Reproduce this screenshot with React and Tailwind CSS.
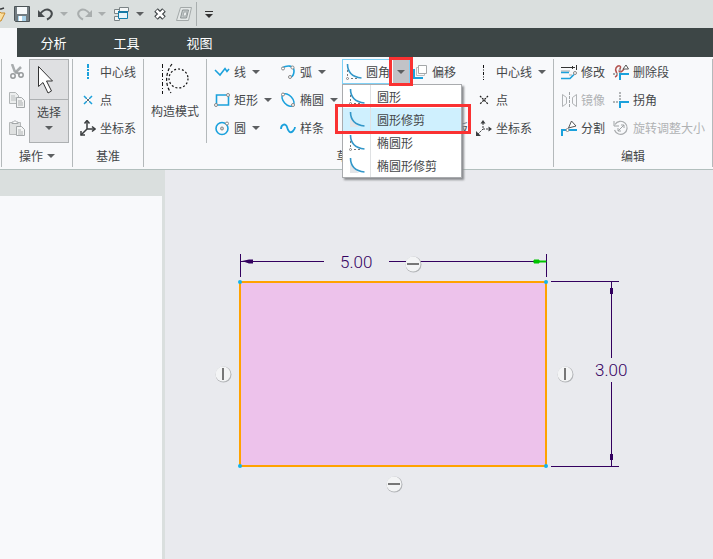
import { useState } from "react";

function Svg({ w = 16, children }) {
  return (
    <svg
      width={w}
      height="16"
      viewBox={`0 0 ${w} 16`}
      fill="none"
      className="shrink-0"
      aria-hidden="true"
    >
      {children}
    </svg>
  );
}

function Caret({ color = "#5c5f61" }) {
  return (
    <svg width="8" height="4" viewBox="0 0 8 4" className="shrink-0" aria-hidden="true">
      <path d="M0 0h8L4 4z" fill={color} />
    </svg>
  );
}

const BLUE = "#1ba1dc";
const INK = "#3a3d3f";

const icons = {
  folder: (
    <Svg w={6}>
      <path d="M-3 3h4l3-1" stroke={INK} strokeWidth="1.500" />
      <path d="M-6 6H0l1 1h4L1 15h-7z" fill="#fbdf9f" stroke="#c98c2c" />
    </Svg>
  ),
  save: (
    <Svg>
      <path d="M.5.5h15v15h-14l-1-1z" fill="#737d82" stroke="#4c5457" />
      <path d="M3 1h10v7H3z" fill="#f6f9fa" />
      <path d="M4 10h8v5H4z" fill="#a9d3ea" />
      <path d="M5 10h3v5H5z" fill="#fff" />
    </Svg>
  ),
  undo: (
    <Svg>
      <path d="M2 8C5 4 9 2.500 12 4.500S14.500 11 9 13.500" stroke="#474c4e" strokeWidth="2" />
      <path d="M0 4v7h7z" fill="#474c4e" />
    </Svg>
  ),
  redo: (
    <Svg>
      <path d="M14 8C11 4 7 2.500 4 4.500S1.500 11 7 13.500" stroke="#a9aeae" strokeWidth="2" />
      <path d="M16 4v7H9z" fill="#a9aeae" />
    </Svg>
  ),
  windows: (
    <Svg>
      <path d="M5.500 1.500h9v4h-9zM.5 3.500h5v4h-5zM.5 10.500h5v4h-5z" fill="#f4f6f6" stroke="#7b8385" />
      <path d="M4.500 5.500h9v7h-9z" fill="#e6f4fb" stroke="#137fac" />
      <path d="M4 5h10v2H4z" fill="#1479a6" />
    </Svg>
  ),
  close: (
    <Svg>
      <path d="M4 4l8 8M12 4l-8 8" stroke="#3d4244" strokeWidth="5" />
      <path d="M4.500 4.500l7 7M11.500 4.500l-7 7" stroke="#fff" strokeWidth="2.500" />
    </Svg>
  ),
  layers: (
    <Svg>
      <path d="M4.500 1.500h11l-3 13H.5z" fill="#e4e8e7" stroke="#a3a9a9" />
      <path d="M6.500 4h6l-2 8h-6z" fill="#c4caca" stroke="#8e9596" />
      <path d="M8 6h3l-1 4H7z" fill="#eef1f1" stroke="#a3a9a9" />
    </Svg>
  ),
  cut: (
    <Svg>
      <path d="M3 0l3 8M12 3L6 9" stroke="#a8acae" strokeWidth="2.500" />
      <path d="M6 8l5 2" stroke="#a0a4a6" strokeWidth="2" />
      <circle cx="4" cy="12" r="2.200" stroke="#96999b" strokeWidth="1.500" />
      <circle cx="12" cy="11" r="2.200" stroke="#96999b" strokeWidth="1.500" />
    </Svg>
  ),
  copy: (
    <Svg>
      <path d="M.5.5h6l3 3v8h-9z" fill="#eceeee" stroke="#b1b5b6" />
      <path d="M2 4h4M2 6h5M2 8h5" stroke="#b9bdbe" />
      <path d="M7.500 5.500h5l3 3v7h-8z" fill="#f1f2f2" stroke="#a3a7a9" />
      <path d="M9 9h4M9 11h5M9 13h5" stroke="#a9adae" />
    </Svg>
  ),
  paste: (
    <Svg>
      <path d="M.5 2.500h11v12H.5z" fill="#dfe1e1" stroke="#b5b8b9" />
      <path d="M3 3.500V2h1.500L6 .5 7.500 2H9v1.500z" fill="#fff" stroke="#a3a7a9" />
      <path d="M7.500 6.500h5l3 3v6h-8z" fill="#f4f5f5" stroke="#a3a7a9" />
      <path d="M9 10h3M9 12h5M9 14h5" stroke="#b0b4b5" />
    </Svg>
  ),
  axisBlue: (
    <Svg>
      <path d="M8 0v16" stroke={BLUE} strokeWidth="2" strokeDasharray="4 1 2 1" />
    </Svg>
  ),
  axisDark: (
    <Svg>
      <path d="M7.500 1v15" stroke="#111" strokeDasharray="3 1.500 1 1.500" />
    </Svg>
  ),
  pointBlue: (
    <Svg>
      <path d="M4 4l8 8M12 4l-8 8" stroke="#5f6b72" />
      <path
        d="M4 4l2.500 2.500M12 4L9.500 6.500M4 12l2.500-2.500M12 12L9.500 9.500"
        stroke={BLUE}
        strokeWidth="1.500"
      />
    </Svg>
  ),
  pointDark: (
    <Svg>
      <path d="M4 4l8 8M12 4l-8 8" stroke="#222" strokeWidth="1.300" strokeDasharray="2 1" />
    </Svg>
  ),
  csys: (
    <Svg>
      <path d="M7 1v8h8M7 9l-6 6" stroke={INK} strokeWidth="1.500" />
      <path
        d="M4.500 3.500L7 .5l2.500 3M12 6.500L15 9l-3 2.500M1 11v4h4"
        stroke={INK}
        strokeWidth="1.500"
      />
    </Svg>
  ),
  csysDashed: (
    <Svg>
      <path d="M7 3v6h5M7 9l-5 5" stroke={INK} strokeDasharray="2 1" />
      <path d="M4.500 3.500L7 0l2.500 3.500zM12.500 6.500L16 9l-3.500 2.500zM0 11v5h5z" fill={INK} />
    </Svg>
  ),
  line: (
    <Svg>
      <path d="M1 6l5 5 5-6.500 2 3L15 5" stroke={BLUE} strokeWidth="1.600" />
    </Svg>
  ),
  rect: (
    <Svg>
      <path d="M2.500 3h12v10h-12z" stroke={BLUE} strokeWidth="1.600" />
      <circle cx="14" cy="3" r="1.500" fill="#fff" stroke="#888" />
      <circle cx="2" cy="13" r="1.500" fill="#fff" stroke="#888" />
    </Svg>
  ),
  circle: (
    <Svg>
      <circle cx="8" cy="8.500" r="6" stroke={BLUE} strokeWidth="1.600" />
      <circle cx="8" cy="8.500" r="1.500" fill="#ccc" stroke="#888" />
      <circle cx="13" cy="3.500" r="1.500" fill="#fff" stroke="#888" />
    </Svg>
  ),
  arc: (
    <Svg>
      <path d="M2 4C7 1 14 1 14 7c0 3-1 5-3 6" stroke={BLUE} strokeWidth="1.600" />
      <circle cx="3" cy="4.500" r="1.500" fill="#fff" stroke="#888" />
      <circle cx="12.500" cy="3.500" r="1.500" fill="#fff" stroke="#888" />
      <circle cx="10" cy="13" r="1.500" fill="#fff" stroke="#888" />
    </Svg>
  ),
  ellipse: (
    <Svg>
      <ellipse
        cx="8"
        cy="8"
        rx="7.500"
        ry="4.500"
        transform="rotate(48 8 8)"
        stroke={BLUE}
        strokeWidth="1.500"
      />
      <circle cx="3" cy="2.500" r="1.500" fill="#fff" stroke="#888" />
      <circle cx="13" cy="13" r="1.500" fill="#fff" stroke="#888" />
    </Svg>
  ),
  spline: (
    <Svg>
      <path d="M1 9C1 4 6 3 7 7s3 7 6 4c1-1 2-2 2-4" stroke={BLUE} strokeWidth="1.800" />
    </Svg>
  ),
  fillet: (
    <Svg>
      <path d="M1.500 6v8.500H11" stroke="#777" strokeDasharray="2 2" />
      <path d="M1.500 0c0 8 5 13 14 14" stroke="#3296c8" strokeWidth="1.600" />
      <circle cx="1.500" cy="14.500" r="1" fill="#fff" stroke="#888" />
    </Svg>
  ),
  filletTrim: (
    <Svg>
      <path d="M1 6v9h9z" fill="#e3e5e8" />
      <path d="M1.500 0c0 8 5 13 14 14" stroke="#3296c8" strokeWidth="1.600" />
    </Svg>
  ),
  offset: (
    <Svg>
      <path d="M4.500 3.500h8v8h-8z" stroke="#b9bcbe" />
      <path d="M6.500 1.500h8v8h-8z" fill="#fff" stroke="#a4a7a9" />
      <path d="M2 5v9h9" stroke={BLUE} strokeWidth="2" />
    </Svg>
  ),
  palette: (
    <Svg>
      <circle cx="8" cy="8" r="6" stroke={BLUE} strokeWidth="1.500" />
    </Svg>
  ),
  modify: (
    <Svg>
      <path d="M0 3.500h14M15.500 1v5M11.500 2v3" stroke="#333" />
      <path d="M0 7h9M8 11h3" stroke="#a4a7a9" />
      <path d="M0 8.500h8M0 14.500h9l4-4" stroke={BLUE} strokeWidth="1.600" />
      <circle cx="14" cy="9" r="1.500" fill="#fff" stroke="#888" />
    </Svg>
  ),
  mirror: (
    <Svg>
      <path d="M1.500 2.500l4 3v6l-4 3zM15.500 2.500l-4 3v6l4 3z" stroke="#b0b3b5" />
      <path d="M8.500 0v16" stroke="#a0a4a6" strokeDasharray="3 1" />
    </Svg>
  ),
  divide: (
    <Svg>
      <path d="M1 16v-6h4M8 10h8" stroke={BLUE} strokeWidth="2" />
      <circle cx="6.500" cy="10" r="1.500" fill="#fff" stroke="#888" />
      <path d="M7.500 8L10.500 1 15 6z" fill="#fff" stroke="#555" />
    </Svg>
  ),
  deleteSeg: (
    <Svg>
      <path d="M2 13c5-2-1-6 1-9s6-3 4 1c-2 3 0 5 4 0" stroke="#b2524e" strokeWidth="1.500" />
      <path d="M7 16v-6h9" stroke={BLUE} strokeWidth="2" />
      <path d="M0 10h6M7 5v4" stroke="#a4a7a9" strokeWidth="2" strokeDasharray="2 1" />
      <path d="M10 5l3-4 2.500 4z" fill="#fff" stroke="#555" />
    </Svg>
  ),
  corner: (
    <Svg>
      <path d="M7 0v8M0 10h6" stroke="#b2b5b7" strokeWidth="2" strokeDasharray="2 1" />
      <path d="M7 16v-6h9" stroke={BLUE} strokeWidth="2" />
    </Svg>
  ),
  rotate: (
    <Svg>
      <path d="M2 4.500A6.500 6.500 0 1 1 1.500 10" stroke="#a9acae" strokeWidth="1.200" />
      <path d="M1 1v5h5M5 11l6-6M5 8v3h3M8 5h3v3" stroke="#a0a4a6" />
    </Svg>
  ),
};

function Tool({ icon, label, caret, disabled }) {
  return (
    <button
      type="button"
      disabled={disabled}
      className="flex h-[25px] items-center whitespace-nowrap disabled:text-[#b0b2b4]"
    >
      {icons[icon]}
      <span className="ml-1">{label}</span>
      {caret ? (
        <span className="ml-1.5">
          <Caret />
        </span>
      ) : null}
    </button>
  );
}

function Column({ children, className = "" }) {
  return (
    <div className={`flex flex-col items-start gap-[3px] ${className}`}>{children}</div>
  );
}

function Group({ label, caret, children, className = "" }) {
  return (
    <section
      aria-label={label}
      className={`flex shrink-0 flex-col border-l border-[#b4b9bb] ${className}`}
    >
      <div className="flex h-[84px]">{children}</div>
      <div className="flex h-6 items-center justify-center gap-1 pt-0.5">
        <span>{label}</span>
        {caret ? <Caret /> : null}
      </div>
    </section>
  );
}

function QuickButton({ icon, label, caret, disabled }) {
  return (
    <button type="button" aria-label={label} className="flex shrink-0 items-center gap-1.5">
      {icons[icon]}
      {caret ? <Caret color={disabled ? "#a9aeae" : "#5c5f61"} /> : null}
    </button>
  );
}

function QuickAccess() {
  return (
    <div className="flex h-7 items-center gap-2 bg-[#dadfde]">
      <QuickButton icon="folder" label="打开" />
      <QuickButton icon="save" label="保存" />
      <QuickButton icon="undo" label="撤消" caret disabled />
      <QuickButton icon="redo" label="重做" caret disabled />
      <QuickButton icon="windows" label="窗口" caret />
      <QuickButton icon="close" label="关闭" />
      <QuickButton icon="layers" label="图层" />
      <div className="-ml-1 h-6 w-px bg-[#a9afaf]" />
      <button type="button" aria-label="自定义" className="flex flex-col gap-0.5">
        <span className="h-px w-2 bg-[#333]" />
        <Caret color="#333" />
      </button>
    </div>
  );
}

const tabs = ["分析", "工具", "视图"];

function Tabs() {
  return (
    <nav className="flex h-[29px] bg-[#f8f9fb] pl-[17px]">
      <div className="flex grow bg-[#3d4646]">
        {tabs.map((tab) => (
          <button key={tab} type="button" className="w-[73px] text-[13px] text-white">
            {tab}
          </button>
        ))}
      </div>
    </nav>
  );
}

const filletTypes = [
  { label: "圆形", icon: "fillet" },
  { label: "圆形修剪", icon: "filletTrim" },
  { label: "椭圆形", icon: "fillet" },
  { label: "椭圆形修剪", icon: "filletTrim" },
];

function FilletMenu() {
  const [open, setOpen] = useState(true);
  const [active, setActive] = useState("圆形修剪");

  return (
    <div className="relative mr-0.5 ml-1 h-[25px] w-[68px]">
      <div className="flex h-full border border-[#7fd0f5] bg-[#fbfcfe]">
        <button type="button" className="flex grow items-center gap-1 pl-[3px] whitespace-nowrap">
          {icons.fillet}
          圆角
        </button>
        <button
          type="button"
          aria-label="圆角类型"
          aria-expanded={open}
          onClick={() => setOpen(!open)}
          className="relative flex w-4 shrink-0 items-center justify-center bg-[#c2c3c7]"
        >
          <Caret />
          <span className="absolute -inset-x-1 -inset-y-[3px] z-30 border-3 border-[#fa3232]" />
        </button>
      </div>

      {open ? (
        <ul
          role="menu"
          className="absolute top-full left-0 z-20 w-[120px] border border-[#a9abae] bg-white shadow-[2px_2px_2px_#8a8c8f]"
        >
          {filletTypes.map((type) => (
            <li key={type.label} role="none" className="relative">
              <button
                type="button"
                role="menuitem"
                onClick={() => setActive(type.label)}
                className={`flex h-[23px] w-full items-center ${
                  type.label === active ? "bg-[#cff0fe]" : ""
                }`}
              >
                <span className="flex h-full w-7 items-center justify-center border-r border-[#dfe1e3]">
                  {icons[type.icon]}
                </span>
                <span className="ml-1.5">{type.label}</span>
              </button>
              {type.label === active ? (
                <span className="pointer-events-none absolute -top-1 -right-2.5 -bottom-[3px] -left-2 z-10 border-3 border-[#fa3232]" />
              ) : null}
            </li>
          ))}
        </ul>
      ) : null}
    </div>
  );
}

function Ribbon() {
  return (
    <div className="flex border-b border-[#b2bfbd] bg-[#f8f9fb] py-0.5 pl-px text-[12px]">
      <Group label="操作" caret>
        <Column className="pl-[7px]">
          <button type="button" aria-label="剪切" className="flex h-[25px] items-center">
            {icons.cut}
          </button>
          <button type="button" aria-label="复制" className="flex h-[25px] items-center">
            {icons.copy}
          </button>
          <button type="button" aria-label="粘贴" className="flex h-[25px] items-center">
            {icons.paste}
          </button>
        </Column>
        <div className="mr-[3px] ml-1 flex w-10 flex-col border border-[#adb0b2] bg-[#dfe0e2]">
          <button
            type="button"
            aria-label="选择工具"
            className="flex h-10 items-center border-b border-[#adb0b2] pl-[7px]"
          >
            <svg width="18" height="30" viewBox="0 0 18 30" aria-hidden="true">
              <path
                d="M1.500 1.500v20l4.500-4 5 10.500 3.500-2L9.500 16h6z"
                fill="#fff"
                stroke="#333"
              />
            </svg>
          </button>
          <button type="button" className="flex grow flex-col items-center pt-1">
            选择
            <span className="mt-1.5">
              <Caret />
            </span>
          </button>
        </div>
      </Group>

      <Group label="基准" className="[&>div]:px-[7px]">
        <Column>
          <Tool icon="axisBlue" label="中心线" />
          <Tool icon="pointBlue" label="点" />
          <Tool icon="csys" label="坐标系" />
        </Column>
      </Group>

      <Group label="草绘">
        <button
          type="button"
          className="flex flex-col items-center gap-2 border-r border-[#b4b9bb] px-[7px] pt-1"
        >
          <svg width="30" height="32" viewBox="0 0 30 32" fill="none" aria-hidden="true">
            <path d="M2.500 1v30" stroke="#111" strokeDasharray="4 2 1 2" />
            <path d="M12 1C5 10 5 22 11 30" stroke="#111" strokeWidth="1.200" strokeDasharray="3 2" />
            <circle cx="18.500" cy="15.500" r="9.500" stroke="#111" strokeWidth="1.200" strokeDasharray="2 2" />
          </svg>
          构造模式
        </button>
        <Column className="pl-[7px]">
          <Tool icon="line" label="线" caret />
          <Tool icon="rect" label="矩形" caret />
          <Tool icon="circle" label="圆" caret />
        </Column>
        <Column className="pl-2">
          <Tool icon="arc" label="弧" caret />
          <Tool icon="ellipse" label="椭圆" caret />
          <Tool icon="spline" label="样条" />
        </Column>
        <FilletMenu />
        <Column>
          <Tool icon="offset" label="偏移" />
          <div className="h-[25px]" />
          <Tool icon="palette" label="选项板" />
        </Column>
        <Column className="pr-[7px] pl-2">
          <Tool icon="axisDark" label="中心线" caret />
          <Tool icon="pointDark" label="点" />
          <Tool icon="csysDashed" label="坐标系" />
        </Column>
      </Group>

      <Group label="编辑" className="border-r">
        <Column className="pl-[7px]">
          <Tool icon="modify" label="修改" />
          <Tool icon="mirror" label="镜像" disabled />
          <Tool icon="divide" label="分割" />
        </Column>
        <Column className="pr-[7px] pl-2">
          <Tool icon="deleteSeg" label="删除段" />
          <Tool icon="corner" label="拐角" />
          <Tool icon="rotate" label="旋转调整大小" disabled />
        </Column>
      </Group>
    </div>
  );
}

function Constraint({ x, y, vertical }) {
  return (
    <g transform={`translate(${x} ${y})`}>
      <circle cx="0.500" cy="0.500" r="8" fill="#b3b5b8" />
      <circle r="7.500" fill="#f3f4f5" />
      <path d={vertical ? "M0-6V6" : "M-6 0H6"} stroke="#777" strokeWidth="2" />
    </g>
  );
}

const corners = [
  [75, 112],
  [381, 112],
  [75, 296],
  [381, 296],
];

function Sketch() {
  return (
    <svg className="min-h-80 min-w-0 grow" role="img" aria-label="矩形截面">
      <rect x="75" y="112" width="306" height="184" fill="#edc2eb" stroke="#ffa200" strokeWidth="2" />

      <g stroke="#33005f">
        <path d="M75.500 84v23M381.500 84v23M76 91.500h83M224 91.500h157" />
        <path d="M386 111.500h68M386 296.500h68M446.500 112v76M446.500 212v84" />
      </g>
      <path d="M77 91l7-1.500h4v4h-4zM445 118h3v6h-3zM445 284h3v6h-3z" fill="#33005f" />
      <path d="M369 90h5v1h7v1h-7v1h-5z" fill="#00c400" stroke="#00c400" />

      <g fill="#33005f" className="font-['Roboto',sans-serif] text-[17px] font-light">
        <text x="175" y="98">5.00</text>
        <text x="430" y="206">3.00</text>
      </g>

      {corners.map(([x, y]) => (
        <circle key={`${x}-${y}`} cx={x} cy={y} r="2" fill="#14b4ea" />
      ))}

      <Constraint x={248} y={94} />
      <Constraint x={229} y={314} />
      <Constraint x={58} y={204} vertical />
      <Constraint x={400} y={204} vertical />
    </svg>
  );
}

export default function App() {
  return (
    <div className="flex min-h-screen flex-col overflow-hidden bg-[#e9eaee] font-['Noto_Sans_CJK_SC',sans-serif] leading-4 text-[#444749]">
      <QuickAccess />
      <Tabs />
      <Ribbon />
      <main className="flex grow">
        <aside className="flex w-[165px] shrink-0 flex-col bg-[#dadfde] pt-[26px] pr-[3px]">
          <div className="grow bg-[#f8f9fb]" />
        </aside>
        <Sketch />
      </main>
    </div>
  );
}
